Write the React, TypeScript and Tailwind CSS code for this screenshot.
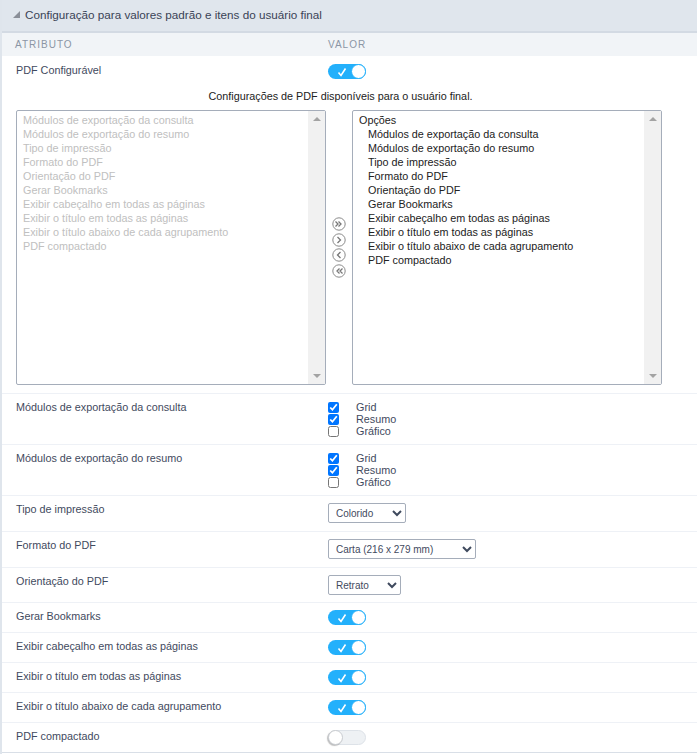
import React from 'react';

const options = [
  'Módulos de exportação da consulta',
  'Módulos de exportação do resumo',
  'Tipo de impressão',
  'Formato do PDF',
  'Orientação do PDF',
  'Gerar Bookmarks',
  'Exibir cabeçalho em todas as páginas',
  'Exibir o título em todas as páginas',
  'Exibir o título abaixo de cada agrupamento',
  'PDF compactado',
];

const Toggle = ({ on = true }: { on?: boolean }) =>
  on ? (
    <div className="relative w-[38px] h-[15px] rounded-full bg-[#23b0fb]">
      <svg viewBox="0 0 10 10" className="absolute left-[9px] top-[3px] w-[10px] h-[10px]">
        <path d="M1.5 5.5 L4 8.5 L8.5 1.5" fill="none" stroke="#fff" strokeWidth="1.6" />
      </svg>
      <div className="absolute right-[0px] top-[0px] w-[15px] h-[15px] rounded-full bg-white border border-[#23b0fb]" />
    </div>
  ) : (
    <div className="relative w-[38px] h-[15px] rounded-full bg-[#eef1f4] border border-[#dde2e8]">
      <div className="absolute left-[-1px] top-[-1px] w-[15px] h-[15px] rounded-full bg-white border border-[#c9ccd0] shadow-[-1px_1px_1px_rgba(0,0,0,0.25)]" />
    </div>
  );

const Row = ({ label, height, children, last }: { label: string; height: string; children: React.ReactNode; last?: boolean }) => (
  <div className={`flex border-b ${last ? 'border-[#d9dfe7]' : 'border-[#eef1f6]'} ${height}`}>
    <div className="w-[326px] pl-[14px] pt-[6px] text-[#3f4a5e]">{label}</div>
    <div className="flex-1 pt-[7px]">{children}</div>
  </div>
);

const Checks = () => (
  <div className="flex flex-col">
    {[
      ['Grid', true],
      ['Resumo', true],
      ['Gráfico', false],
    ].map(([name, checked]) => (
      <label key={name as string} className="flex items-center h-[12px] text-[#3f4a5e]">
        <input type="checkbox" defaultChecked={checked as boolean} className="w-[11px] h-[11px] m-0 accent-[#0075ff]" />
        <span className="ml-[17px]">{name as string}</span>
      </label>
    ))}
  </div>
);

const Dropdown = ({ value, width, options: opts }: { value: string; width: string; options: string[] }) => (
  <select
    defaultValue={value}
    className={`${width} h-[20px] bg-white border border-[#a5adba] rounded-[2px] pl-[3px] text-[10px] text-[#3f4a5e] appearance-auto`}
  >
    {opts.map((o) => (
      <option key={o}>{o}</option>
    ))}
  </select>
);

const Scrollbar = () => (
  <div className="w-[17px] h-full bg-[#f1f1f1] flex flex-col justify-between items-center py-[6px]">
    <div className="w-0 h-0 border-l-[4px] border-r-[4px] border-b-[4px] border-l-transparent border-r-transparent border-b-[#a3a3a3]" />
    <div className="w-0 h-0 border-l-[4px] border-r-[4px] border-t-[4px] border-l-transparent border-r-transparent border-t-[#a3a3a3]" />
  </div>
);

const MoveBtn = ({ d }: { d: string }) => (
  <svg viewBox="0 0 14 14" className="w-[14px] h-[14px]">
    <circle cx="7" cy="7" r="6.2" fill="#fff" stroke="#8a8a8a" strokeWidth="1" />
    <path d={d} fill="none" stroke="#777" strokeWidth="1.3" />
  </svg>
);

export default function App() {
  return (
    <div className="w-[697px] h-[754px] bg-white border-l-2 border-[#dfe5ec] font-['Liberation_Sans',Arial,sans-serif] text-[10.8px] leading-[14px] overflow-hidden">
      <div className="flex items-center h-[33px] bg-[#e0e6ed] border-b-2 border-[#d3dae3] pl-[11px] pb-[2px] text-[11.7px] text-[#3a4356] font-medium">
        <div className="w-0 h-0 mr-[5px] border-b-[7px] border-l-[7px] border-b-[#8a8f98] border-l-transparent" />
        Configuração para valores padrão e itens do usuário final
      </div>

      <div className="flex items-center h-[23px] bg-[#f1f4f7] text-[10px] tracking-[1px] text-[#8b96a5]">
        <div className="w-[326px] pl-[13px]">ATRIBUTO</div>
        <div>VALOR</div>
      </div>

      <div className="flex h-[33px]">
        <div className="w-[326px] pl-[14px] pt-[7px] text-[#3f4a5e]">PDF Configurável</div>
        <div className="pt-[8px]">
          <Toggle />
        </div>
      </div>

      <div className="h-[21px] text-center text-[#222] pr-[18px]">Configurações de PDF disponíveis para o usuário final.</div>

      <div className="flex h-[284px] border-b border-[#eef1f6]">
        <div className="w-[310px] h-[275px] ml-[14px] border border-[#a5adba] rounded-[2px] flex">
          <div className="flex-1 pl-[6px] pt-[2px] text-[#c0c0c0]">
            {options.map((o) => (
              <div key={o}>{o}</div>
            ))}
          </div>
          <Scrollbar />
        </div>

        <div className="w-[26px] flex flex-col items-center gap-[1.5px] pt-[107px]">
          <MoveBtn d="M3.5 4.5 L6 7 L3.5 9.5 M6.5 4.5 L9 7 L6.5 9.5" />
          <MoveBtn d="M5.5 4 L8.5 7 L5.5 10" />
          <MoveBtn d="M8.5 4 L5.5 7 L8.5 10" />
          <MoveBtn d="M7.5 4.5 L5 7 L7.5 9.5 M10.5 4.5 L8 7 L10.5 9.5" />
        </div>

        <div className="w-[310px] h-[275px] border border-[#a5adba] rounded-[2px] flex">
          <div className="flex-1 pl-[6px] pt-[2px] text-[#222]">
            <div>Opções</div>
            {options.map((o) => (
              <div key={o} className="pl-[9px]">
                {o}
              </div>
            ))}
          </div>
          <Scrollbar />
        </div>
      </div>

      <Row label="Módulos de exportação da consulta" height="h-[51px]">
        <Checks />
      </Row>
      <Row label="Módulos de exportação do resumo" height="h-[51px]">
        <Checks />
      </Row>
      <Row label="Tipo de impressão" height="h-[36px]">
        <Dropdown value="Colorido" width="w-[78px]" options={['Colorido', 'Preto e branco']} />
      </Row>
      <Row label="Formato do PDF" height="h-[36px]">
        <Dropdown value="Carta (216 x 279 mm)" width="w-[148px]" options={['Carta (216 x 279 mm)', 'A4 (210 x 297 mm)']} />
      </Row>
      <Row label="Orientação do PDF" height="h-[35px]">
        <Dropdown value="Retrato" width="w-[73px]" options={['Retrato', 'Paisagem']} />
      </Row>
      <Row label="Gerar Bookmarks" height="h-[30px]">
        <Toggle />
      </Row>
      <Row label="Exibir cabeçalho em todas as páginas" height="h-[30px]">
        <Toggle />
      </Row>
      <Row label="Exibir o título em todas as páginas" height="h-[30px]">
        <Toggle />
      </Row>
      <Row label="Exibir o título abaixo de cada agrupamento" height="h-[30px]">
        <Toggle />
      </Row>
      <Row label="PDF compactado" height="h-[30px]" last>
        <Toggle on={false} />
      </Row>
    </div>
  );
}
